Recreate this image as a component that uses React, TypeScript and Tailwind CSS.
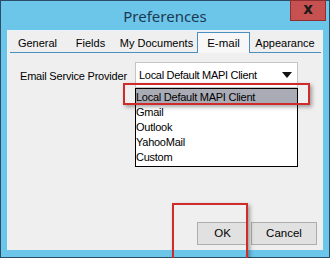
import React from "react";

const tabs = [
  { label: "General", w: "w-[55px]" },
  { label: "Fields", w: "w-[51px]" },
  { label: "My Documents", w: "w-[81px]" },
  { label: "E-mail", w: "w-[53px]", active: true },
  { label: "Appearance", w: "w-[70px]" },
];

const items = ["Gmail", "Outlook", "YahooMail", "Custom"];

export default function App() {
  return (
    <div
      className="w-[330px] h-[258px] bg-[#2b4d68] p-[1px] overflow-hidden relative"
      style={{ fontFamily: '"Liberation Sans", Arial, sans-serif' }}
    >
      <div className="w-full h-full bg-[#6cc6ea] flex flex-col">
        {/* Title bar */}
        <div className="h-[29px] relative flex items-center justify-center shrink-0">
          <span
            className="text-[15px] text-[#1d3a52] mt-[1px]"
            style={{ fontFamily: '"Noto Sans", "Open Sans", sans-serif' }}
          >
            Preferences
          </span>
          <div className="absolute right-[3px] top-[-1px] w-[36px] h-[21px] bg-[#c75050] border border-[#8f3030] flex items-center justify-center">
            <span
              className="text-[15px] font-bold text-[#1a1a1a] leading-none mb-[2px]"
              style={{ fontFamily: '"DejaVu Sans", sans-serif' }}
            >
              x
            </span>
          </div>
        </div>
        {/* Content */}
        <div className="mx-[6px] mb-[7px] flex-1 bg-[#efefef] border-l border-t border-[#e8f4fa] flex flex-col relative">
          {/* Tabs */}
          <div className="pt-[1px] px-[2px]">
            <div className="flex items-end h-[21px] border-b border-[#4a8fc0]">
              {tabs.map((t) =>
                t.active ? (
                  <div
                    key={t.label}
                    className={`${t.w} h-[21px] -mb-[1px] bg-[#f7f7f7] border border-b-0 border-[#4a8fc0] flex items-center justify-center text-[11.5px] text-black whitespace-nowrap`}
                  >
                    <span className="mt-[2px]">{t.label}</span>
                  </div>
                ) : (
                  <div
                    key={t.label}
                    className={`${t.w} h-[19px] flex items-center justify-center text-[11px] text-black whitespace-nowrap`}
                  >
                    <span className="mt-[2px]">{t.label}</span>
                  </div>
                )
              )}
            </div>
          </div>
          {/* Form */}
          <div className="flex items-center mt-[9px] pl-[12px]">
            <span className="text-[11px] tracking-[-0.2px] text-black w-[115px] whitespace-nowrap mt-[2px]">
              Email Service Provider
            </span>
            <div className="w-[163px] h-[26px] bg-white border border-[#c4c4c4] flex items-center justify-between pl-[3px] pr-[5px] relative">
              <span className="text-[11px] tracking-[-0.3px] text-black whitespace-nowrap">
                Local Default MAPI Client
              </span>
              <svg width="10" height="6" viewBox="0 0 10 6">
                <path d="M0 0 L10 0 L5 6 Z" fill="#111" />
              </svg>
              {/* Dropdown list */}
              <div className="absolute left-[-1px] top-[25px] w-[163px] bg-white border border-black flex flex-col z-10">
                <div className="h-[16px] bg-[#a9abb5] text-[11px] tracking-[-0.25px] text-black flex items-center whitespace-nowrap">
                  Local Default MAPI Client
                </div>
                {items.map((it) => (
                  <div
                    key={it}
                    className="h-[15px] text-[11px] tracking-[-0.25px] text-black flex items-center"
                  >
                    {it}
                  </div>
                ))}
                <div className="h-[1px]" />
              </div>
            </div>
          </div>
          <div className="flex-1" />
          {/* Buttons */}
          <div className="flex justify-end gap-[3px] pr-[6px] pb-[5px]">
            <div className="w-[51px] h-[23px] bg-[#e1e1e1] border border-[#adadad] flex items-center justify-center text-[11.5px] text-black">
              OK
            </div>
            <div className="w-[66px] h-[23px] bg-[#e1e1e1] border border-[#adadad] flex items-center justify-center text-[11.5px] text-black">
              Cancel
            </div>
          </div>
        </div>
      </div>
      {/* Red highlight rectangles (annotations) */}
      <div className="absolute left-[123px] top-[83px] w-[187px] h-[22px] border-2 border-[#cf2b2b] shadow-[2px_2px_4px_rgba(0,0,0,0.35)] z-20 pointer-events-none" />
      <div className="absolute left-[172px] top-[203px] w-[76px] h-[70px] border-2 border-[#cf2b2b] shadow-[2px_2px_4px_rgba(0,0,0,0.35)] z-20 pointer-events-none" />
    </div>
  );
}
